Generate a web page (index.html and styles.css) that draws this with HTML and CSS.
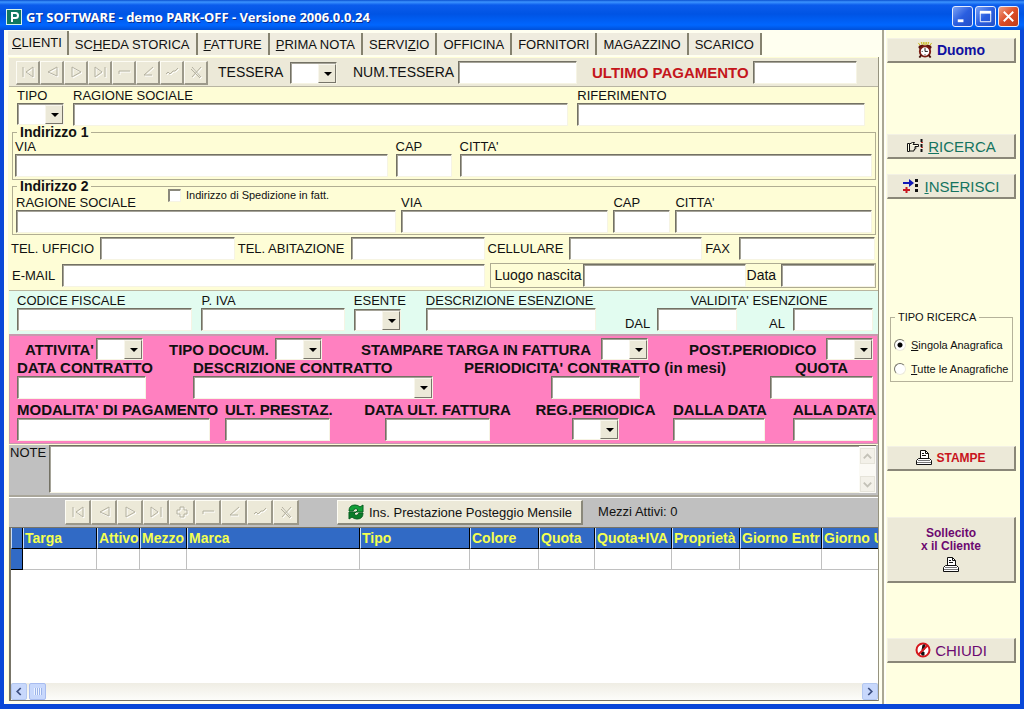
FILE: index.html
```html
<!DOCTYPE html>
<html lang="it">
<head>
<meta charset="utf-8">
<title>GT SOFTWARE - demo PARK-OFF - Versione 2006.0.0.24</title>
<link rel="stylesheet" href="styles.css">
</head>
<body>
<svg class="defs" aria-hidden="true">
  <symbol id="first" viewBox="0 0 14 14"><path d="M2 2v10M12 2 5 7l7 5z"/></symbol>
  <symbol id="prev" viewBox="0 0 14 14"><path d="M12 2 3 7l9 4z"/></symbol>
  <symbol id="next" viewBox="0 0 14 14"><path d="M3 2v10l9-5z"/></symbol>
  <symbol id="last" viewBox="0 0 14 14"><path d="M2 2v10l7-5zM12 2v10"/></symbol>
  <symbol id="plus" viewBox="0 0 14 14"><path d="M5 2h4v3h3v4H9v3H5V9H2V5h3z"/></symbol>
  <symbol id="minus" viewBox="0 0 14 14"><path d="M2 9V6h11"/></symbol>
  <symbol id="edit" viewBox="0 0 14 14"><path d="M12 2 3 10h8"/></symbol>
  <symbol id="post" viewBox="0 0 14 14"><path d="m1 9 2-2 2 2 3-3h2l3-3"/></symbol>
  <symbol id="cancel" viewBox="0 0 14 14"><path d="m3 2 9 10M12 2 3 12M2 4l9 9"/></symbol>
  <symbol id="printer" viewBox="0 0 16 16"><path fill="#fff" stroke="#111" d="M4.500 8V.5h5l3 3V8"/><path fill="none" stroke="#111" d="M9.500.5v3h3M6 3.500h2M6 5.500h4"/><path fill="#fff" stroke="#111" d="M2.500 8.500h11l2 2v4H.5v-4z"/><path stroke="#777" d="M1 12.500h14M2 10.500h12"/></symbol>
</svg>
<header class="titlebar">
  <svg class="app-icon" viewBox="0 0 16 16" aria-hidden="true"><rect x=".5" y=".5" width="15" height="15" fill="#107860" stroke="#d8f4e8"/><path d="M6 13V4h3.500a2.500 2.500 0 0 1 0 5H6" fill="none" stroke="#fff" stroke-width="2"/></svg>
  <h1>GT SOFTWARE - demo PARK-OFF - Versione 2006.0.0.24</h1>
  <button class="win" aria-label="Riduci"><svg viewBox="0 0 20 20"><path d="M5 14.500h6" stroke="#fff" stroke-width="3"/></svg></button>
  <button class="win" aria-label="Ingrandisci"><svg viewBox="0 0 20 20"><path d="M4.500 6v9.500h11V6" fill="none" stroke="#fff"/><path d="M4 5.500h12" stroke="#fff" stroke-width="3"/></svg></button>
  <button class="win close" aria-label="Chiudi"><svg viewBox="0 0 20 20"><path d="m5 5 10 10M15 5 5 15" stroke="#fff" stroke-width="2"/></svg></button>
</header>
<div class="window">
  <main class="main">
    <nav class="tabs">
      <button class="tab active"><u>C</u>LIENTI</button>
      <button class="tab">SC<u>H</u>EDA STORICA</button>
      <button class="tab"><u>F</u>ATTURE</button>
      <button class="tab"><u>P</u>RIMA NOTA</button>
      <button class="tab">SERVI<u>Z</u>IO</button>
      <button class="tab">OFFICINA</button>
      <button class="tab">FORNITORI</button>
      <button class="tab">MAGAZZINO</button>
      <button class="tab">SCARICO</button>
    </nav>
    <form class="sheet">
      <section class="card-bar">
        <div class="navigator">
          <button type="button" aria-label="Primo"><svg><use href="#first"/></svg></button>
          <button type="button" aria-label="Precedente"><svg><use href="#prev"/></svg></button>
          <button type="button" aria-label="Successivo"><svg><use href="#next"/></svg></button>
          <button type="button" aria-label="Ultimo"><svg><use href="#last"/></svg></button>
          <button type="button" aria-label="Elimina"><svg><use href="#minus"/></svg></button>
          <button type="button" aria-label="Modifica"><svg><use href="#edit"/></svg></button>
          <button type="button" aria-label="Conferma"><svg><use href="#post"/></svg></button>
          <button type="button" aria-label="Annulla"><svg><use href="#cancel"/></svg></button>
        </div>
        <label for="tessera">TESSERA</label>
        <span class="combo"><select id="tessera"></select></span>
        <label class="num-label" for="numtessera">NUM.TESSERA</label>
        <input id="numtessera">
        <label class="payment" for="ultimo">ULTIMO PAGAMENTO</label>
        <input id="ultimo">
      </section>
      <section class="identity">
        <div class="field"><label for="tipo">TIPO</label><span class="combo"><select id="tipo"></select></span></div>
        <div class="field"><label for="ragione">RAGIONE SOCIALE</label><input id="ragione"></div>
        <div class="field"><label for="rif">RIFERIMENTO</label><input id="rif"></div>
      </section>
      <fieldset class="address">
        <legend>Indirizzo 1</legend>
        <div class="address-one">
          <div class="field"><label for="via1">VIA</label><input id="via1"></div>
          <div class="field"><label for="cap1">CAP</label><input id="cap1"></div>
          <div class="field"><label for="citta1">CITTA'</label><input id="citta1"></div>
        </div>
      </fieldset>
      <fieldset class="address">
        <legend>Indirizzo 2</legend>
        <label class="shipping"><input type="checkbox">Indirizzo di Spedizione in fatt.</label>
        <div class="address-two">
          <div class="field"><label for="ragione2">RAGIONE SOCIALE</label><input id="ragione2"></div>
          <div class="field"><label for="via2">VIA</label><input id="via2"></div>
          <div class="field"><label for="cap2">CAP</label><input id="cap2"></div>
          <div class="field"><label for="citta2">CITTA'</label><input id="citta2"></div>
        </div>
      </fieldset>
      <section class="phones">
        <label for="telu">TEL. UFFICIO</label><input id="telu">
        <label for="tela">TEL. ABITAZIONE</label><input id="tela">
        <label for="cell">CELLULARE</label><input id="cell">
        <label for="fax">FAX</label><input id="fax">
      </section>
      <section class="mail">
        <label for="email">E-MAIL</label><input id="email">
        <div class="birth">
          <label for="luogo">Luogo nascita</label><input id="luogo">
          <label for="nascita">Data</label><input id="nascita">
        </div>
      </section>
      <section class="fiscal">
        <div class="field"><label for="cf">CODICE FISCALE</label><input id="cf"></div>
        <div class="field"><label for="piva">P. IVA</label><input id="piva"></div>
        <div class="field"><label for="esente">ESENTE</label><span class="combo"><select id="esente"></select></span></div>
        <div class="field"><label for="desc">DESCRIZIONE ESENZIONE</label><input id="desc"></div>
        <div class="validity">
          <span class="validity-title">VALIDITA' ESENZIONE</span>
          <label for="dal">DAL</label><input id="dal">
          <label for="al">AL</label><input id="al">
        </div>
      </section>
      <section class="contract">
        <div class="options">
          <div><label for="attivita">ATTIVITA'</label><span class="combo"><select id="attivita"></select></span></div>
          <div><label for="docum">TIPO DOCUM.</label><span class="combo"><select id="docum"></select></span></div>
          <div><label for="stampare">STAMPARE TARGA IN FATTURA</label><span class="combo"><select id="stampare"></select></span></div>
          <div><label for="post-p">POST.PERIODICO</label><span class="combo"><select id="post-p"></select></span></div>
        </div>
        <div class="terms">
          <div class="field"><label for="datac">DATA CONTRATTO</label><input id="datac"></div>
          <div class="field"><label for="descc">DESCRIZIONE CONTRATTO</label><span class="combo wide"><select id="descc"></select></span></div>
          <div class="field centered short"><label for="period">PERIODICITA' CONTRATTO (in mesi)</label><input id="period"></div>
          <div class="field"><label class="center" for="quota">QUOTA</label><input id="quota"></div>
        </div>
        <div class="billing">
          <div class="field"><label for="mod">MODALITA' DI PAGAMENTO</label><input id="mod"></div>
          <div class="field"><label for="ult">ULT. PRESTAZ.</label><input id="ult"></div>
          <div class="field centered"><label for="fatt">DATA ULT. FATTURA</label><input id="fatt"></div>
          <div class="field centered"><label for="reg">REG.PERIODICA</label><span class="combo"><select id="reg"></select></span></div>
          <div class="field"><label for="dalla">DALLA DATA</label><input id="dalla"></div>
          <div class="field"><label for="alla">ALLA DATA</label><input id="alla"></div>
        </div>
      </section>
      <section class="notes">
        <label for="note">NOTE</label>
        <textarea id="note"></textarea>
        <div class="vscroll">
          <button type="button" aria-label="Su"><svg viewBox="0 0 14 14"><path d="m3 9 4-4 4 4"/></svg></button>
          <button type="button" aria-label="Giù"><svg viewBox="0 0 14 14"><path d="m3 5 4 4 4-4"/></svg></button>
        </div>
      </section>
      <section class="vehicle-bar">
        <div class="navigator large">
          <button type="button" aria-label="Primo"><svg><use href="#first"/></svg></button>
          <button type="button" aria-label="Precedente"><svg><use href="#prev"/></svg></button>
          <button type="button" aria-label="Successivo"><svg><use href="#next"/></svg></button>
          <button type="button" aria-label="Ultimo"><svg><use href="#last"/></svg></button>
          <button type="button" aria-label="Inserisci"><svg><use href="#plus"/></svg></button>
          <button type="button" aria-label="Elimina"><svg><use href="#minus"/></svg></button>
          <button type="button" aria-label="Modifica"><svg><use href="#edit"/></svg></button>
          <button type="button" aria-label="Conferma"><svg><use href="#post"/></svg></button>
          <button type="button" aria-label="Annulla"><svg><use href="#cancel"/></svg></button>
        </div>
        <button type="button" class="parking"><svg viewBox="0 0 18 18" aria-hidden="true"><path d="M2 8q0-6 6-6 3 0 5 2l3-2v7H9l2-2q-3-3-5 1z" fill="#12a038" stroke="#075e20"/><path d="M16 10q0 6-6 6-3 0-5-2l-3 2V9h7l-2 2q3 3 5-1z" fill="#0a7c28" stroke="#075e20"/></svg>Ins. Prestazione Posteggio Mensile</button>
        <span>Mezzi Attivi: 0</span>
      </section>
      <section class="grid-box">
        <table>
          <colgroup><col class="c-mark"><col class="c-targa"><col class="c-attivo"><col class="c-mezzo"><col><col class="c-tipo"><col class="c-colore"><col class="c-quota"><col class="c-iva"><col class="c-prop"><col class="c-entr"><col class="c-usc"></colgroup>
          <thead><tr><th></th><th>Targa</th><th>Attivo</th><th>Mezzo</th><th>Marca</th><th>Tipo</th><th>Colore</th><th>Quota</th><th>Quota+IVA</th><th>Proprietà</th><th>Giorno Entr</th><th>Giorno U</th></tr></thead>
          <tbody><tr><td class="marker"></td><td></td><td></td><td></td><td></td><td></td><td></td><td></td><td></td><td></td><td></td><td></td></tr></tbody>
        </table>
        <div class="hscroll">
          <button type="button" aria-label="Sinistra"><svg viewBox="0 0 16 16"><path d="m10 4-4 4 4 4"/></svg></button>
          <div class="thumb"></div>
          <button type="button" class="end" aria-label="Destra"><svg viewBox="0 0 16 16"><path d="m6 4 4 4-4 4"/></svg></button>
        </div>
      </section>
    </form>
  </main>
  <aside class="side">
    <button class="action duomo"><svg viewBox="0 0 16 17" aria-hidden="true"><path d="M1 1l2 3M4 0l1 3M8 0v3M12 0l-1 3M15 1l-2 3M6 0l1 3M10 0 9 3" stroke="#c8b810"/><path d="M1 6q0-3 5-3l1 1h2l1-1q5 0 5 3l-2 2H3z" fill="#5a120c"/><circle cx="8" cy="10" r="5.500" fill="#fff" stroke="#7b1c12" stroke-width="2"/><path d="M8 6.500V10h3M8 13v1M4.500 10h1" stroke="#111" fill="none"/><path d="m4 14-2 2.500M12 14l2 2.500" stroke="#42100a" stroke-width="2"/></svg>Duomo</button>
    <button class="action search"><svg viewBox="0 0 18 16" aria-hidden="true"><path d="M1.500 5.500h2v8h-2zM3.500 6l3-1.500h2L7 6.500h5.500v2H9v1.500h1.500M9 10v1.500H8V13H4" fill="#ffffe8" stroke="#111"/><path d="M15.500 1v15" stroke="#111" stroke-width="2" stroke-dasharray="3 2"/><path d="M15 4.500h2M15 9.500h2" stroke="#b33"/></svg><span><u>R</u>ICERCA</span></button>
    <button class="action insert"><svg viewBox="0 0 18 16" aria-hidden="true"><path d="M1 5h8" stroke="#1018b8" stroke-width="2"/><path d="m7 1 5 4-5 4z" fill="#1018b8"/><path d="M1 12h7M4.500 9v6" stroke="#c81820" stroke-width="2"/><path d="M14.500 1v15" stroke="#111" stroke-width="3" stroke-dasharray="3 2"/></svg><span><u>I</u>NSERISCI</span></button>
    <fieldset class="mode">
      <legend>TIPO RICERCA</legend>
      <label><input type="radio" name="mode" checked><span><u>S</u>ingola Anagrafica</span></label>
      <label><input type="radio" name="mode"><span><u>T</u>utte le Anagrafiche</span></label>
    </fieldset>
    <button class="action print"><svg aria-hidden="true"><use href="#printer"/></svg>STAMPE</button>
    <button class="action reminder"><span>Sollecito<br>x il Cliente</span><svg aria-hidden="true"><use href="#printer"/></svg></button>
    <button class="action exit"><svg viewBox="0 0 16 16" aria-hidden="true"><circle cx="8" cy="8" r="6.500" fill="#fff" stroke="#d4181c" stroke-width="2"/><path d="M8 3h2l-1 5H7zM6 10l3 0v3H7z" fill="#111" stroke="#111"/><path d="m12.500 3.500-9 9" stroke="#d4181c" stroke-width="2"/></svg>CHIUDI</button>
  </aside>
</div>
</body>
</html>
```
FILE: styles.css
```css
* { box-sizing: border-box; }
body {
  margin: 0;
  min-height: 100vh;
  display: flex;
  flex-direction: column;
  background: #0a48d8;
  color: #111;
  font: 13px/15px "Liberation Sans", Arial, sans-serif;
}
.defs { display: none; }
button, input, select, textarea { font: inherit; color: inherit; border-radius: 0; margin: 0; padding: 0; min-width: 0; }
label { white-space: nowrap; }

/* title bar */
.titlebar {
  display: flex;
  align-items: center;
  gap: 2px;
  height: 30px;
  padding: 3px 5px 0 6px;
  background: linear-gradient(#0a50d0, #3c94ff 2px, #0b5cec 5px, #0054e4 14px, #0066ff 25px, #0050d8);
}
.app-icon { width: 16px; height: 16px; }
h1 {
  flex: 1;
  margin: 0;
  padding-left: 2px;
  color: #fff;
  font: bold 13px/16px "Noto Sans", "Open Sans", sans-serif;
  text-shadow: 1px 1px #0a2e90;
}
.win {
  width: 21px;
  height: 21px;
  border: 1px solid #e4ecff;
  border-radius: 3px;
  background: linear-gradient(135deg, #7ba2f4, #2a5ee0 50%, #2450c8);
}
.win svg { display: block; width: 19px; height: 19px; }
.win.close { background: linear-gradient(135deg, #f0a084, #dc4c26 50%, #c03c18); }

/* window body */
.window {
  flex: 1;
  display: grid;
  grid-template-columns: minmax(0, 1fr) 136px;
  margin: 0 4px 5px;
  background: #fffff0;
}
.main { display: flex; flex-direction: column; padding: 1px 3px 3px 4px; border-right: 2px solid #aaa794; }
.tabs { display: flex; align-items: stretch; height: 26px; padding-bottom: 2px; }
.tab {
  margin-top: 2px;
  padding: 0 6px;
  border: 0;
  border-right: 2px solid #85826f;
  background: #efecdf;
  white-space: nowrap;
}
.tab.active { margin-top: 0; padding: 0 5px 2px 4px; }
.sheet {
  flex: 1;
  display: flex;
  flex-direction: column;
  padding-left: 1px;
  border-right: 1px solid #96937f;
  background: #fefdd6;
}

/* controls */
input:not([type]), textarea, .combo {
  width: 100%;
  height: 23px;
  border: 1px solid #737164;
  border-right-color: #f6f4e4;
  border-bottom-color: #f6f4e4;
  box-shadow: inset 1px 1px #a5a398;
  background: #fff;
  padding-left: 3px;
}
.combo { position: relative; display: block; flex: none; width: 47px; height: 22px; padding: 2px; }
.combo select { display: block; width: 100%; height: 100%; border: 0; background: transparent; appearance: none; }
.combo::before {
  content: "";
  position: absolute;
  top: 1px;
  right: 0;
  bottom: 0;
  width: 16px;
  border: 1px solid #f8f6ec;
  border-right-color: #77756a;
  border-bottom-color: #77756a;
  background: #ece9d8;
  pointer-events: none;
}
.combo::after {
  content: "";
  position: absolute;
  top: 9px;
  right: 4px;
  border: 4px solid transparent;
  border-top-color: #000;
  border-bottom: 0;
  pointer-events: none;
}
.combo.wide { width: 100%; height: 23px; }
.field { display: flex; flex-direction: column; min-width: 0; }
.field.centered { align-items: center; }
.center { text-align: center; }

.navigator { display: flex; }
.navigator button {
  width: 24px;
  height: 24px;
  border: 1px solid #fdfcf4;
  border-right: 2px solid #9c998a;
  border-bottom: 2px solid #9c998a;
  background: #ece9d8;
}
.navigator svg { display: block; width: 14px; height: 14px; margin: auto; fill: none; stroke: #b4b1a1; filter: drop-shadow(1px 1px #fff); }
.navigator.large button { width: 26px; height: 25px; }

/* form rows */
.card-bar {
  display: grid;
  grid-template-columns: 202px 72px 63px 105px minmax(60px, 1fr) 176px 104px;
  align-items: center;
  height: 29px;
  margin-top: 1px;
  padding: 1px 21px 0 7px;
  border-bottom: 1px solid #b8b5a2;
  background: #ece9d8;
}
.card-bar label { font-size: 14px; }
.card-bar .payment { padding-left: 15px; color: #c4161c; font-size: 15px; font-weight: bold; }
.identity { display: grid; grid-template-columns: 47px minmax(0, 496fr) minmax(0, 288fr); gap: 9px; padding: 1px 13px 0 8px; }
.address { position: relative; margin: 0 2px 0 3px; padding: 0; border: 1px solid #b1ae93; }
.address legend { margin-left: 4px; padding: 0 3px; font-size: 14px; line-height: 12px; font-weight: bold; }
.address-one { display: grid; grid-template-columns: minmax(0, 373fr) 56px minmax(0, 413fr); gap: 8px; padding: 1px 3px 2px 2px; }
.address-two { display: grid; grid-template-columns: minmax(0, 379fr) minmax(0, 207fr) 57px minmax(0, 196fr); gap: 5px; padding: 3px 3px 1px; }
.shipping {
  position: absolute;
  top: -4px;
  left: 155px;
  display: flex;
  align-items: center;
  gap: 5px;
  padding-right: 3px;
  background: #fefdd6;
  font-size: 11px;
}
input[type="checkbox"] { width: 13px; height: 13px; appearance: none; border: 2px solid #8a887c; border-right: 1px solid #f6f4e4; border-bottom: 1px solid #f6f4e4; background: #fff; }
.phones {
  display: grid;
  grid-template-columns: 89px minmax(0, 135fr) 116px minmax(0, 134fr) 84px minmax(0, 134fr) 37px minmax(0, 136fr);
  align-items: center;
  padding: 2px 3px 0 2px;
}
.phones input + label { padding-left: 3px; }
.mail { display: grid; grid-template-columns: 50px minmax(0, 424fr) minmax(0, 391fr); align-items: center; padding: 3px 2px 2px 3px; }
.birth {
  display: grid;
  grid-template-columns: 92px minmax(0, 163fr) 35px minmax(0, 95fr);
  align-items: center;
  margin-left: 5px;
  border: 1px solid #aeab92;
  font-size: 14px;
}
.birth label { padding-left: 3px; }
.birth input + label { padding-left: 1px; }
.fiscal {
  display: grid;
  grid-template-columns: minmax(0, 175fr) minmax(0, 143fr) 63px minmax(0, 170fr) minmax(0, 267fr);
  column-gap: 9px;
  height: 44px;
  padding: 2px 5px 0 8px;
  border-top: 1px solid #b9b69f;
  background: #e2fcf0;
}
.fiscal .combo { margin-top: 1px; }
.validity { display: grid; grid-template-columns: 32px 80px 56px 80px; grid-template-rows: 15px 23px; justify-content: end; align-items: end; }
.validity-title { grid-column: 1 / -1; text-align: center; padding-left: 20px; }
.validity input + label { text-align: right; padding-right: 8px; }

/* contract panel */
.contract {
  height: 110px;
  padding: 2px 4px 0 7px;
  border: 1px solid #c79aae;
  border-top: 2px solid #c79aae;
  background: #ff80c0;
}
.contract label { font-size: 15px; font-weight: bold; line-height: 17px; }
.options { display: grid; grid-template-columns: 144fr 192fr 328fr 184fr; height: 21px; padding-left: 8px; }
.options div { display: flex; align-items: center; gap: 6px; }
.options div:first-child { gap: 2px; }
.options div:nth-child(3) { gap: 10px; }
.options div:last-child { justify-content: space-between; gap: 0; }
.terms { display: grid; grid-template-columns: minmax(0, 176fr) minmax(0, 272fr) minmax(0, 305fr) minmax(0, 103fr); }
.terms .field:nth-child(1) { padding-right: 47px; }
.terms .field:nth-child(2) { padding-right: 32px; }
.terms .field:nth-child(3) { padding-right: 45px; }
.billing {
  display: grid;
  grid-template-columns: minmax(0, 208fr) minmax(0, 136fr) minmax(0, 176fr) minmax(0, 136fr) minmax(0, 120fr) minmax(0, 80fr);
  padding-top: 2px;
}
.billing .field:nth-child(1) { padding-right: 15px; }
.billing .field:nth-child(2) { padding-right: 31px; }
.billing .field:nth-child(3) { padding-right: 23px; }
.billing .field:nth-child(4) { padding-right: 19px; }
.billing .field:nth-child(5) { padding-right: 28px; }
.contract .short input { width: 89px; }
.billing .centered input { width: 105px; }

/* notes */
.notes { display: flex; height: 52px; margin-top: 1px; padding: 0 2px 2px 0; background: #c0c0c0; border-bottom: 2px solid #a9a69a; }
.notes label { width: 40px; padding-left: 1px; }
.notes textarea { flex: 1; width: auto; height: auto; border-right: 0; resize: none; overflow: hidden; }
.vscroll { display: flex; flex-direction: column; justify-content: space-between; width: 17px; padding: 2px 1px 1px; border-top: 1px solid #737164; background: #fbfaf5; }
.vscroll button { width: 15px; height: 16px; border: 1px solid #e6e4da; background: #f3f1e9; }
.vscroll svg { display: block; width: 13px; height: 13px; fill: none; stroke: #c4c2b8; stroke-width: 2; }

/* vehicles */
.vehicle-bar { display: flex; height: 30px; padding: 2px 0 2px 56px; background: #c0c0c0; border-top: 1px solid #fff; }
.parking {
  display: flex;
  align-items: center;
  gap: 4px;
  margin: 0 15px 0 38px;
  padding: 0 9px;
  border: 1px solid #fdfcf4;
  border-right: 2px solid #8a887a;
  border-bottom: 2px solid #8a887a;
  background: #ece9d8;
  font-size: 13px;
  white-space: nowrap;
}
.parking svg { width: 18px; height: 18px; }
.vehicle-bar span { padding-top: 4px; }
.grid-box { flex: 1; display: flex; flex-direction: column; min-height: 172px; overflow: hidden; border: 1px solid #777468; border-left-width: 2px; border-right: 0; background: #fff; }
table { width: 100%; table-layout: fixed; border-collapse: separate; border-spacing: 0; }
th {
  height: 21px;
  padding: 0 0 0 1px;
  overflow: hidden;
  border-right: 1px solid #000;
  border-bottom: 1px solid #000;
  border-left: 1px solid #c8dcf8;
  background: #316ac5;
  color: #f4ff50;
  font-size: 14px;
  line-height: 15px;
  text-align: left;
  white-space: nowrap;
}
td { height: 21px; padding: 0; border-right: 1px solid #c0c0c0; border-bottom: 1px solid #c0c0c0; }
th:last-child, td:last-child { border-right: 0; }
.marker { background: #316ac5; border-color: #000; }
.c-mark { width: 12px; }
.c-targa { width: 74px; }
.c-attivo { width: 43px; }
.c-mezzo { width: 47px; }
.c-tipo { width: 110px; }
.c-colore { width: 69px; }
.c-quota { width: 56px; }
.c-iva { width: 77px; }
.c-prop { width: 68px; }
.c-entr { width: 82px; }
.c-usc { width: 56px; }
.hscroll { display: flex; gap: 2px; height: 17px; margin-top: auto; background: linear-gradient(#efede4, #fdfdfa); }
.hscroll button { width: 16px; height: 17px; border: 1px solid #b4c8f0; border-radius: 2px; background: #c8d8fc; }
.hscroll svg { display: block; width: 14px; height: 15px; fill: none; stroke: #3c4f80; stroke-width: 2; }
.thumb { width: 17px; border: 1px solid #a8bcf0; border-radius: 2px; background: repeating-linear-gradient(90deg, #eef4ff 0 1px, #9cb4ea 1px 2px) center / 8px 7px no-repeat #c8d8fc; }
.hscroll .end { margin-left: auto; }

/* side panel */
.side { display: flex; flex-direction: column; margin-left: 1px; padding: 8px 4px 3px 1px; border-left: 1px solid #fff; background: #ffffe1; }
.action {
  display: flex;
  align-items: center;
  justify-content: center;
  gap: 4px;
  height: 25px;
  border: 1px solid #f3f1e4;
  border-right: 2px solid #8a8778;
  border-bottom: 2px solid #8a8778;
  background: #ece9d8;
  font-size: 15px;
}
.action svg { flex: none; width: 16px; height: 16px; }
.duomo { color: #1010a0; font-size: 14px; font-weight: bold; }
.search, .insert { color: #147460; }
.search svg, .insert svg { width: 18px; }
.search { margin-top: 71px; }
.insert { margin-top: 15px; }
.mode { margin: 111px 3px 0; padding: 9px 0 0 3px; height: 72px; border: 1px solid #b5b29a; font-size: 11px; }
.mode legend { margin-left: 1px; padding: 0 3px; line-height: 14px; }
.mode label { display: flex; align-items: center; gap: 5px; height: 24px; }
.mode input {
  width: 12px;
  height: 12px;
  appearance: none;
  border: 1px solid #77756a;
  border-right-color: #eceadc;
  border-bottom-color: #eceadc;
  border-radius: 50%;
  background: #fff;
}
.mode input:checked { background: radial-gradient(circle, #000 2px, #fff 3px); }
.print { margin-top: 64px; color: #c8141c; font-size: 12px; font-weight: bold; }
.reminder { flex-direction: column; gap: 4px; height: 66px; margin-top: 46px; color: #6c0870; font-size: 12px; line-height: 13px; font-weight: bold; }
.exit { margin-top: 55px; color: #6c0870; }
```
